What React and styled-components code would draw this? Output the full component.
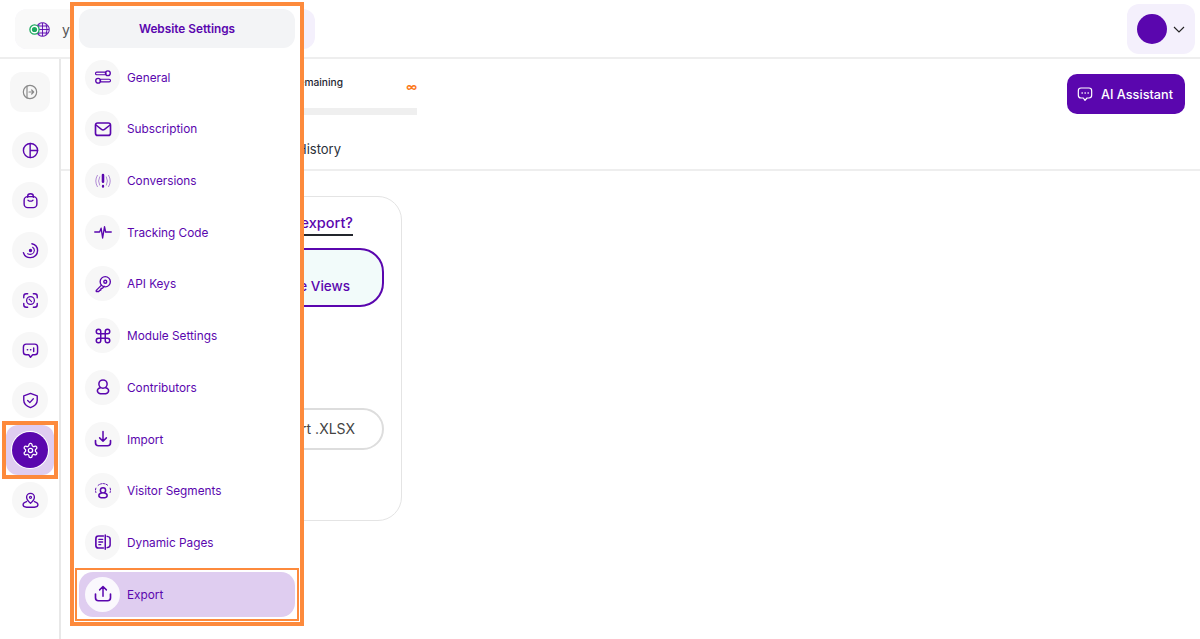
import React from 'react';
import styled, {createGlobalStyle} from 'styled-components';

const purple = '#5a06ae';
const lilac = '#dfcdf0';
const orange = '#fd8a3c';

// icons, all on a 24 grid
const icons = {
	general: (
		<>
			<rect x="2" y="5.500" width="14" height="3.500" rx="1.750" strokeWidth="1.500" />
			<circle cx="18.500" cy="7" r="3.200" strokeWidth="1.800" />
			<rect x="8" y="15" width="14" height="3.500" rx="1.750" strokeWidth="1.500" />
			<circle cx="5.500" cy="17" r="3.200" strokeWidth="1.800" />
		</>
	),
	subscription: (
		<>
			<rect x="2" y="4" width="20" height="16.500" rx="3" strokeWidth="2.200" />
			<path d="M3 7l7 5.500q2 1.500 4 0L21 7" strokeWidth="2" />
		</>
	),
	conversions: (
		<>
			<path d="M12 4v9" strokeWidth="3.400" />
			<path d="M12 18.500v1" strokeWidth="3" />
			<path d="M7.500 6.500q-3 5.500 0 11M16.500 6.500q3 5.500 0 11M4.500 4.500q-4.500 7.500 0 15M19.500 4.500q4.500 7.500 0 15" strokeWidth="1.100" opacity="0.550" />
		</>
	),
	tracking: <path d="M1 12h6.500l2-5 2 13 2.500-15 1.500 7h7.500" strokeWidth="1.800" />,
	key: (
		<>
			<circle cx="15" cy="9" r="6.800" />
			<circle cx="15" cy="9" r="2" />
			<path d="M10 13.500l-7 7v1.500h3.500l1-1.500 1.500-.5.5-2 2-.5 2-2.500" />
		</>
	),
	command: <path d="M15 6v12a3 3 0 1 0 3-3H6a3 3 0 1 0 3 3V6a3 3 0 1 0-3 3h12a3 3 0 1 0-3-3" strokeWidth="2" />,
	person: (
		<>
			<circle cx="12" cy="8" r="5.500" strokeWidth="2" />
			<path d="M8.500 13q-4 1-4 4t4 4h7q4-1 4-4t-4-4" strokeWidth="2" />
		</>
	),
	import: (
		<>
			<path d="M12 2v13M7.500 10.500L12 15l4.500-4.500" strokeWidth="2" />
			<path d="M2 14v3q0 4 4 4h12q4 0 4-4v-3" strokeWidth="2.200" />
		</>
	),
	segments: (
		<>
			<circle cx="12" cy="11" r="3.500" strokeWidth="2" />
			<path d="M9.500 15q-3 .5-3 3t3 3h5q3-.5 3-3t-3-3" strokeWidth="2" />
			<path d="M2.500 14a9.500 9.500 0 0 1 0-6M21.500 14a9.500 9.500 0 0 0 0-6M5.500 4.500a10 10 0 0 1 13 0" strokeWidth="1.300" strokeDasharray="2 1.800" />
		</>
	),
	pages: (
		<>
			<path d="M12.500 4H6q-3.500 0-3.500 3.500v9Q2.500 20 6 20h6.500" strokeWidth="2.200" />
			<path d="M15 2.500v19M17.500 4.500q4 .5 4 3.500v8q0 3-4 3.500" strokeWidth="2" />
			<path d="M6.500 8.500h5M6.500 12h5M6.500 15.500h2.500" strokeWidth="1.800" />
		</>
	),
	export: (
		<>
			<path d="M12 15V2M7.500 6.500L12 2l4.500 4.500" strokeWidth="2" />
			<path d="M2 12v5q0 4 4 4h12q4 0 4-4v-5" strokeWidth="2.200" />
		</>
	),
	collapse: (
		<>
			<circle cx="12" cy="12" r="10" />
			<path d="M7.500 3v18M10.500 12h7M14.500 9l3 3-3 3" />
		</>
	),
	pie: (
		<>
			<circle cx="12" cy="12" r="10" strokeWidth="2" />
			<path d="M11.500 2v20M11.500 12H22" strokeWidth="2" />
		</>
	),
	bag: (
		<>
			<path d="M8 7.500V6q0-3.500 4-3.500T16 6v1.500" strokeWidth="2" />
			<rect x="3" y="6.500" width="18" height="15.500" rx="5" strokeWidth="2" />
			<path d="M8.500 11.500q3.500 3 7 0" strokeWidth="1.800" />
		</>
	),
	radar: (
		<>
			<path d="M2 15a10 10 0 0 0 10 7c6 0 10-4.500 10-10a10 10 0 0 0-8-9.500" strokeWidth="2" />
			<path d="M8 16.500q3 1.500 6 .5t3.500-5q0-3-2.500-4.500" strokeWidth="1.600" />
			<circle cx="12" cy="12" r="1.500" fill={purple} />
		</>
	),
	scan: (
		<>
			<path d="M2.500 8V6Q2.500 2.500 6 2.500h2M16 2.500h2Q21.500 2.500 21.500 6v2M21.500 16v2q0 3.500-3.500 3.500h-2M8 21.500H6Q2.500 21.500 2.500 18v-2" strokeWidth="2" />
			<circle cx="12" cy="12" r="5.500" strokeWidth="1.800" />
			<path d="M10 10l3.500 3.500" strokeWidth="1.600" />
		</>
	),
	chat: (
		<>
			<path d="M6 3h12q4 0 4 4v7q0 4-4 4h-3l-3 3.500L9.500 18H6q-4 0-4-4V7q0-4 4-4z" strokeWidth="2" />
			<path d="M7.500 11h.5M12 11h.5M16.500 8.500v5" strokeWidth="2" />
		</>
	),
	shield: (
		<>
			<path d="M12 2l9.500 3.500v6c0 5-4 8.500-9.500 10.500-5.500-2-9.500-5.500-9.500-10.500v-6z" strokeWidth="2" />
			<path d="M8 12l3 3 5-5.500" strokeWidth="1.800" />
		</>
	),
	gear: (
		<>
			<path d="M12.220 2h-.44a2 2 0 0 0-2 2v.180a2 2 0 0 1-1 1.730l-.430.250a2 2 0 0 1-2 0l-.150-.080a2 2 0 0 0-2.730.730l-.220.380a2 2 0 0 0 .730 2.730l.150.100a2 2 0 0 1 1 1.720v.510a2 2 0 0 1-1 1.740l-.150.090a2 2 0 0 0-.730 2.730l.220.380a2 2 0 0 0 2.730.730l.150-.080a2 2 0 0 1 2 0l.430.250a2 2 0 0 1 1 1.730V20a2 2 0 0 0 2 2h.440a2 2 0 0 0 2-2v-.180a2 2 0 0 1 1-1.730l.430-.250a2 2 0 0 1 2 0l.150.080a2 2 0 0 0 2.730-.730l.220-.390a2 2 0 0 0-.730-2.730l-.150-.080a2 2 0 0 1-1-1.740v-.500a2 2 0 0 1 1-1.740l.150-.090a2 2 0 0 0 .730-2.730l-.220-.380a2 2 0 0 0-2.730-.730l-.150.080a2 2 0 0 1-2 0l-.430-.250a2 2 0 0 1-1-1.730V4a2 2 0 0 0-2-2z" strokeWidth="1.800" />
			<circle cx="12" cy="12" r="3" strokeWidth="1.800" />
		</>
	),
	pin: (
		<>
			<path d="M12 16c-3.500-3-5.500-5.500-5.500-8.500a5.500 5.500 0 0 1 11 0c0 3-2 5.500-5.500 8.500z" strokeWidth="1.900" />
			<circle cx="12" cy="7.500" r="1.500" strokeWidth="1.600" />
			<path d="M6.500 13.500Q1.500 15 1.500 18t5 3.500h11q5-.5 5-3.500t-5-4.500" strokeWidth="1.900" />
		</>
	),
	message: (
		<>
			<path d="M6 3h12q4 0 4 4v7q0 4-4 4h-3l-3 3.500L9.500 18H6q-4 0-4-4V7q0-4 4-4z" strokeWidth="1.800" />
			<path d="M7.500 10.500h.5M12 10.500h.5M16.500 10.500h.5" strokeWidth="2" />
		</>
	),
};

const menuItems = [
	{label: 'General', icon: 'general'},
	{label: 'Subscription', icon: 'subscription'},
	{label: 'Conversions', icon: 'conversions'},
	{label: 'Tracking Code', icon: 'tracking'},
	{label: 'API Keys', icon: 'key'},
	{label: 'Module Settings', icon: 'command'},
	{label: 'Contributors', icon: 'person'},
	{label: 'Import', icon: 'import'},
	{label: 'Visitor Segments', icon: 'segments'},
	{label: 'Dynamic Pages', icon: 'pages'},
	{label: 'Export', icon: 'export', active: true},
];

const sideItems = ['pie', 'bag', 'radar', 'scan', 'chat', 'shield', 'gear', 'pin'];

const Icon = ({name, size = 18, color = purple}) => (
	<svg
		width={size}
		height={size}
		viewBox="0 0 24 24"
		fill="none"
		stroke={color}
		strokeWidth="1.800"
		strokeLinecap="round"
		strokeLinejoin="round"
	>
		{icons[name]}
	</svg>
);

export default function App() {
	return (
		<Page>
			<GlobalStyle />
			<Header>
				<Selector>
					<SiteName>
						<svg width="21" height="15" viewBox="0 0 21 15" fill="none">
							<circle cx="13.500" cy="7.500" r="6.800" fill="#efe6f8" stroke={purple} />
							<path d="M13.500 1v13M7 7.500h13M8 4h11M8 11h11M10 2q-2 5.500 0 11M17 2q2 5.500 0 11" stroke={purple} strokeWidth="0.900" />
							<circle cx="5.500" cy="7.500" r="4.600" fill="#fff" stroke="#1ba85f" strokeWidth="1.300" />
							<circle cx="5.500" cy="7.500" r="2.600" fill="#1ba85f" />
						</svg>
						<span>yoursite.com</span>
					</SiteName>
				</Selector>
				<UserMenu>
					<Avatar />
					<svg width="12" height="7" viewBox="0 0 12 7" fill="none" stroke="#222" strokeWidth="1.100">
						<path d="M1 1l5 5 5-5" />
					</svg>
				</UserMenu>
			</Header>
			<Body>
				<Sidebar>
					<CollapseButton>
						<Icon name="collapse" size={16} color="#8a8a8a" />
					</CollapseButton>
					{sideItems.map((name) => (
						<SideRow key={name} $active={name === 'gear'}>
							<SideIcon $active={name === 'gear'}>
								<Icon name={name} size={17} color={name === 'gear' ? '#fff' : purple} />
							</SideIcon>
						</SideRow>
					))}
				</Sidebar>
				<Main>
					<TopRow>
						<Quota>
							<QuotaLine>
								<QuotaLabel>Monthly visits remaining</QuotaLabel>
								<Infinity>∞</Infinity>
							</QuotaLine>
							<QuotaBar />
						</Quota>
						<AssistantButton>
							<Icon name="message" size={16} color="#fff" />
							AI Assistant
						</AssistantButton>
					</TopRow>
					<Tabs>
						<Tab>Export History</Tab>
					</Tabs>
					<Card>
						<CardTitle>
							<span>What would you like to export?</span>
						</CardTitle>
						<OptionButton>Page Views</OptionButton>
						<FormatButton>Export .XLSX</FormatButton>
					</Card>
				</Main>
			</Body>
			<Menu>
				<MenuTitle>Website Settings</MenuTitle>
				{menuItems.map((item) => (
					<MenuRow key={item.label} $active={item.active}>
						<MenuIcon $active={item.active}>
							<Icon name={item.icon} />
						</MenuIcon>
						<MenuLabel>{item.label}</MenuLabel>
					</MenuRow>
				))}
			</Menu>
		</Page>
	);
}

const GlobalStyle = createGlobalStyle`
	html, body {
		margin: 0;
		background: #fff;
	}

	body {
		font-family: Inter, "Liberation Sans", sans-serif;
	}

	* {
		box-sizing: border-box;
	}
`;

const Page = styled.div`
	position: relative;
	width: 1200px;
	height: 639px;
	overflow: hidden;
`;

const Header = styled.header`
	display: flex;
	justify-content: space-between;
	height: 59px;
	padding: 4px 5px 0 15px;
	border-bottom: 2px solid #eeeeee;
`;

const Selector = styled.div`
	display: flex;
	width: 300px;
	height: 40px;
	margin-top: 5px;
	border-radius: 12px;
	background: #f4f0fc;
`;

const SiteName = styled.div`
	display: flex;
	align-items: center;
	gap: 12px;
	width: 280px;
	padding-left: 14px;
	border-radius: 12px;
	background: #f9f9f9;
	color: #555;
	font-size: 14px;
`;

const UserMenu = styled.div`
	display: flex;
	align-items: center;
	gap: 6px;
	width: 68px;
	height: 50px;
	padding-left: 10px;
	border-radius: 12px;
	background: #f4f0fc;
`;

const Avatar = styled.div`
	width: 30px;
	height: 30px;
	border-radius: 50%;
	background: ${purple};
`;

const Body = styled.div`
	display: flex;
	height: 580px;
`;

const Sidebar = styled.nav`
	display: flex;
	flex-direction: column;
	align-items: center;
	flex: none;
	width: 61px;
	padding: 13px 0 0 1px;
	border-right: 2px solid #e8e8e8;
`;

const CollapseButton = styled.div`
	display: flex;
	align-items: center;
	justify-content: center;
	width: 40px;
	height: 40px;
	margin-bottom: 13px;
	border-radius: 12px;
	background: #f7f7f7;
`;

const SideRow = styled.div`
	position: relative;
	display: flex;
	align-items: center;
	justify-content: center;
	width: 48px;
	height: 50px;
	border-radius: 12px;
	background: ${({$active}) => ($active ? lilac : 'transparent')};

	&::after {
		content: '';
		display: ${({$active}) => ($active ? 'block' : 'none')};
		position: absolute;
		inset: -4px;
		border: 4px solid ${orange};
	}
`;

const SideIcon = styled.div`
	display: flex;
	align-items: center;
	justify-content: center;
	width: 36px;
	height: 36px;
	border-radius: 50%;
	background: ${({$active}) => ($active ? purple : '#f7f7f7')};
	box-shadow: ${({$active}) => ($active ? '0 0 0 1px #fff' : 'none')};
`;

const Main = styled.main`
	display: flex;
	flex-direction: column;
	flex: 1;
	min-width: 0;
`;

const TopRow = styled.div`
	display: flex;
	justify-content: space-between;
	height: 91px;
	padding: 15px 15px 0 29px;
`;

const Quota = styled.div`
	display: flex;
	flex-direction: column;
	width: 327px;
`;

const QuotaLine = styled.div`
	display: flex;
	height: 34px;
	justify-content: space-between;
`;

const QuotaLabel = styled.div`
	width: 253px;
	padding-top: 1px;
	color: #1c2430;
	font-size: 10.200px;
	font-weight: 500;
	line-height: 14px;
	text-align: right;
	white-space: nowrap;
`;

const Infinity = styled.div`
	padding-top: 5px;
	color: #fb7a1e;
	font-size: 11px;
	font-weight: 700;
	line-height: 16px;
`;

const QuotaBar = styled.div`
	height: 7px;
	background: #efefef;
`;

const AssistantButton = styled.div`
	display: flex;
	align-items: center;
	gap: 8px;
	width: 118px;
	height: 40px;
	padding-left: 10px;
	border-radius: 10px;
	background: ${purple};
	color: #fff;
	font-size: 12.700px;
	font-weight: 500;
`;

const Tabs = styled.div`
	height: 21px;
	border-bottom: 2px solid #eeeeee;
`;

const Tab = styled.div`
	width: 280px;
	margin-top: -11px;
	color: #2a2f38;
	font-size: 13px;
	line-height: 20px;
	text-align: right;
	white-space: nowrap;
`;

const Card = styled.section`
	display: flex;
	flex-direction: column;
	align-items: flex-end;
	width: 326px;
	height: 325px;
	margin: 25px 0 0 15px;
	padding: 16px 17px 0 0;
	border: 1px solid #e4e4e4;
	border-radius: 24px;
`;

const CardTitle = styled.div`
	width: 100%;
	padding-right: 31px;
	color: ${purple};
	font-size: 14.500px;
	font-weight: 500;
	line-height: 20px;
	text-align: right;
	white-space: nowrap;

	span {
		display: inline-block;
		padding-bottom: 1px;
		border-bottom: 2px solid #23262d;
	}
`;

const OptionButton = styled.div`
	width: 280px;
	height: 59px;
	margin-top: 12px;
	padding: 27px 32px 0 0;
	border: 2px solid ${purple};
	border-radius: 24px;
	background: #f2fbfa;
	color: ${purple};
	font-size: 13.500px;
	font-weight: 500;
	line-height: 18px;
	text-align: right;
`;

const FormatButton = styled.div`
	width: 280px;
	height: 42px;
	margin-top: 101px;
	padding-right: 27px;
	border: 2px solid #dddddd;
	border-radius: 21px;
	color: #444;
	font-size: 14px;
	line-height: 38px;
	text-align: right;
`;

const Menu = styled.aside`
	position: absolute;
	top: 2px;
	left: 70px;
	display: flex;
	flex-direction: column;
	gap: 6.700px;
	width: 234px;
	height: 624px;
	padding: 3px 5px 0;
	border: 4px solid ${orange};
	background: #fff;
`;

const MenuTitle = styled.div`
	flex: none;
	height: 39px;
	padding-top: 1px;
	border-radius: 12px;
	background: #f3f4f6;
	color: ${purple};
	font-size: 11.800px;
	font-weight: 600;
	line-height: 39px;
	text-align: center;
`;

const MenuRow = styled.div`
	position: relative;
	display: flex;
	align-items: center;
	flex: none;
	gap: 7px;
	height: 45px;
	padding-left: 6px;
	border-radius: 14px;
	background: ${({$active}) => ($active ? lilac : 'transparent')};

	&::after {
		content: '';
		display: ${({$active}) => ($active ? 'block' : 'none')};
		position: absolute;
		inset: -4px;
		border: 2px solid ${orange};
	}
`;

const MenuLabel = styled.span`
	padding-top: 1px;
	color: ${purple};
	font-size: 11.800px;
`;

const MenuIcon = styled.div`
	display: flex;
	align-items: center;
	justify-content: center;
	width: 35px;
	height: 35px;
	border-radius: 50%;
	background: ${({$active}) => ($active ? '#faf8fd' : '#f7f7f7')};
`;
